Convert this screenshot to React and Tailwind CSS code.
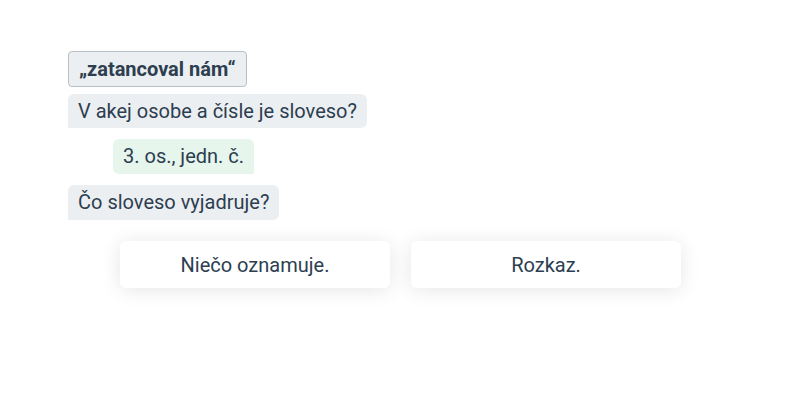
export default function App() {
  return (
    <div
      className="w-[800px] h-[400px] bg-white text-[#2c3e50] pt-[51px]"
      style={{ fontFamily: "Roboto, 'Liberation Sans', sans-serif" }}
    >
      <div className="pl-[68px] flex flex-col items-start">
        <div className="rounded-[4px] border border-[#b8bfc6] bg-[#eceff1] px-[10px] py-[6px] text-[20px] leading-[22px] font-bold">
          „zatancoval nám“
        </div>
        <div className="mt-[7px] rounded-[6px] rounded-bl-none bg-[#eceff1] px-[10px] py-[6px] text-[20px] leading-[22px]">
          V akej osobe a čísle je sloveso?
        </div>
        <div className="mt-[11px] ml-[45px] rounded-[6px] rounded-br-none bg-[#e6f6ec] px-[10px] py-[6px] text-[20px] leading-[23px]">
          3. os., jedn. č.
        </div>
        <div className="mt-[11px] rounded-[6px] rounded-bl-none bg-[#eceff1] px-[10px] py-[6px] text-[20px] leading-[23px]">
          Čo sloveso vyjadruje?
        </div>
      </div>
      <div className="mt-[21px] flex justify-center gap-[21px] pl-px">
        <button className="w-[270px] h-[47px] rounded-[6px] bg-white text-[20px] text-[#2c3e50] shadow-[0_2px_20px_rgba(0,0,0,0.10)]">
          Niečo oznamuje.
        </button>
        <button className="w-[270px] h-[47px] rounded-[6px] bg-white text-[20px] text-[#2c3e50] shadow-[0_2px_20px_rgba(0,0,0,0.10)]">
          Rozkaz.
        </button>
      </div>
    </div>
  );
}
